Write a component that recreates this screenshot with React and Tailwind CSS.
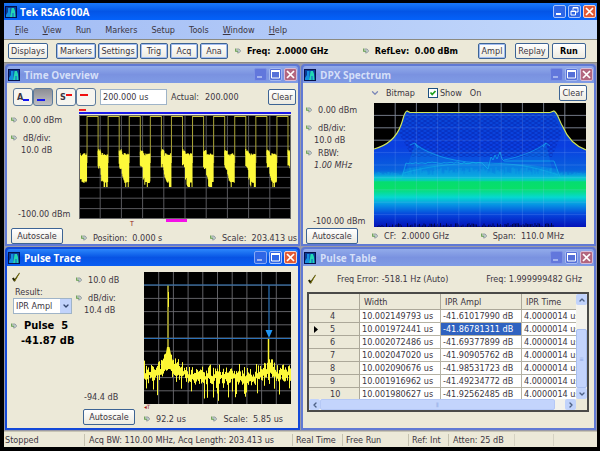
import { ChevronDown, ChevronUp, ChevronLeft, ChevronRight } from "lucide-react";

// Repeatable pseudo random numbers, so that the traces look the same on every load.
function makeRandom(seed) {
  let s = seed;
  return () => {
    s = (s * 16807) % 2147483647;
    return s / 2147483647;
  };
}

function AppIcon() {
  return (
    <svg viewBox="0 0 12 12" className="size-3 shrink-0" aria-hidden="true">
      <rect width="12" height="12" fill="#06104a" />
      <rect x="1" y="1" width="10" height="10" fill="#0a3a96" />
      <path d="M1 11V9L3 6V2H5.500V11Z" fill="#1590e0" />
      <path d="M5 11L6 6L6.500 2H9L10 5L10.500 11Z" fill="#22d8b4" />
      <path d="M7.500 11V7H8.500V11Z" fill="#1550cc" />
    </svg>
  );
}

function Knob() {
  return (
    <svg viewBox="0 0 6 6" className="size-[6px] shrink-0" aria-hidden="true">
      <path d="M1.500 1H4L5.300 2.200V3.500L4 4.800H2" fill="#c3cbd0" stroke="#8d979c" strokeWidth="0.900" />
      <path d="M0.700 0.500V3.200H3.200" fill="none" stroke="#5d9a48" strokeWidth="1.100" />
    </svg>
  );
}

function Check() {
  return (
    <svg viewBox="0 0 10 10" className="size-[10px]" aria-hidden="true">
      <path d="M1 6.500L2.800 5.500L3.800 7L8 1L9 0.800L4 9.500L3 9.500Z" fill="#222200" />
      <path d="M3.500 9L8.500 1.500" stroke="#b8a800" strokeWidth="0.600" />
    </svg>
  );
}

function WindowButtons({ active, main }) {
  const blue = active ? "bg-[#2f66e6] border-[#a9c3fa]" : "bg-[#5570d8] border-[#a5b8f0]";
  const dim = active ? "bg-[#2f66e6] border-[#86a8f5]" : "bg-[#6277dc] border-[#7d92e4]";
  const red = active ? "bg-[#e25a35] border-[#f8d5ca]" : "bg-[#b3667f] border-[#d9bcd6]";
  const base = "flex size-[13px] items-center justify-center rounded-[2px] border";
  return (
    <div className="flex gap-[2px]">
      <button aria-label="Minimize" className={`${base} ${main ? blue : dim}`}>
        <svg viewBox="0 0 11 11" className="size-[11px]">
          <path d="M2 8H7" stroke={main ? "#fff" : "#a3b3ee"} strokeWidth="2" />
        </svg>
      </button>
      <button aria-label={main ? "Restore" : "Maximize"} className={`${base} ${blue}`}>
        <svg viewBox="0 0 11 11" className="size-[11px]" fill="none" stroke="#fff">
          {main ? (
            <path d="M4 4V1.500H9V6H7M2 5H6.500V9H2ZM2 5.500H6.500M4 2H9" />
          ) : (
            <path d="M1.500 2V9H9.500V2M1 2.500H10M1 1.500H10" />
          )}
        </svg>
      </button>
      <button aria-label="Close" className={`${base} ${red}`}>
        <svg viewBox="0 0 11 11" className="size-[11px]">
          <path d="M2 2L9 9M9 2L2 9" stroke="#fff" strokeWidth="1.700" />
        </svg>
      </button>
    </div>
  );
}

function Button({ children, className = "", ringed }) {
  return (
    <button
      className={`flex h-4 items-center justify-center rounded-[2px] border border-[#3d6494] bg-gradient-to-b from-white to-[#eceae0] whitespace-nowrap ${ringed ? "ring-1 ring-[#a3bdf0] ring-inset" : ""} ${className}`}
    >
      {children}
    </button>
  );
}

function Panel({ title, active, children }) {
  return (
    <section
      className={`flex min-w-0 flex-col rounded-t-[4px] border-2 ${active ? "border-[#1348d8] bg-[#1348d8]" : "border-[#6079d4] bg-[#6079d4]"}`}
    >
      <header
        className={`flex h-[17px] shrink-0 items-center gap-1 rounded-t-[3px] px-px ${active ? "bg-gradient-to-b from-[#2c86fb] via-[#0853e4] to-[#0a5df2]" : "bg-gradient-to-b from-[#92abea] via-[#7a92e0] to-[#7f9be5]"}`}
      >
        <AppIcon />
        <h2
          className={`flex-1 font-['Open_Sans',sans-serif] text-[10px] font-bold ${active ? "text-white" : "text-[#d5dff8]"}`}
        >
          {title}
        </h2>
        <WindowButtons active={active} />
      </header>
      <div className="flex flex-1 flex-col bg-[#ece9d8]">{children}</div>
    </section>
  );
}

function Grid({ w, h, cols, rows, color = "#626266" }) {
  const lines = [];
  for (let i = 1; i < cols; i++) lines.push(`M${(w / cols) * i} 0V${h}`);
  for (let i = 1; i < rows; i++) lines.push(`M0 ${(h / rows) * i}H${w}`);
  return <path d={lines.join("")} stroke={color} strokeWidth="0.900" fill="none" />;
}

function TimePlot() {
  const rnd = makeRandom(77);
  let noise = "";
  let pulses = "";
  let tops = "";
  for (let p = -1; p < 10; p++) {
    const start = 19 + 21 * p;
    for (let i = 0; i < 10; i += 0.5) {
      const x = start + i;
      if (x < 0 || x > 210) continue;
      const early = i < 3;
      const top = early ? 34 + rnd() * 3 : 38 + rnd() * 3;
      const end = early ? 48 + i + rnd() * 5 : Math.min(66, 48 + i * 3.5) + (rnd() > 0.75 ? 6 : rnd() * 2);
      noise += `M${x} ${top}V${end}`;
    }
    if (p >= 0) {
      const a = 8 + 21 * p;
      pulses += `M${a} 48V1.500H${a + 11}V40`;
      tops += `M${a} 1.500H${a + 11}`;
    }
  }
  return (
    <svg viewBox="0 0 211 104" preserveAspectRatio="none" className="block h-[104px] w-full bg-black">
      <Grid w={211} h={104} cols={10} rows={10} />
      <path d={pulses} fill="none" stroke="#aaa436" strokeWidth="1" />
      <path d={noise} stroke="#fdf93a" strokeWidth="1" />
      <path d={tops} stroke="#cfc73c" />
      <rect x="0.500" y="0.500" width="210" height="103" fill="none" stroke="#666" />
    </svg>
  );
}

function PulsePlot() {
  const rnd = makeRandom(4242);
  let noise = "";
  for (let x = 0; x < 147; x += 1) {
    const d = Math.abs(x - 24);
    const e = Math.abs(x - 125);
    const lift = 18 * Math.exp(-d / 4) + 5 * Math.exp(-d / 12) + 7 * Math.exp(-e / 3);
    const slope = x > 40 && x < 112 ? 3 : 0;
    const top = 92 + slope - lift + rnd() * 10 - (rnd() > 0.85 ? 3 : 0);
    const deep = rnd() > 0.76 ? rnd() * 20 : 0;
    const end = 103 + slope - lift * 0.6 + rnd() * 7 + deep * (d < 10 ? 0.2 : 1);
    noise += `M${x + 0.5} ${top}V${end}`;
  }
  return (
    <svg viewBox="0 0 147 132" preserveAspectRatio="none" className="block h-[132px] w-full bg-black">
      <Grid w={147} h={132} cols={10} rows={10} color="#6c6c70" />
      <path d={noise} stroke="#fdf93a" strokeWidth="1" />
      <path d="M24 13V85" stroke="#8f8a2c" strokeWidth="2" />
      <path d="M24.500 20V35" stroke="#fbf532" strokeWidth="1" />
      <path d="M18 97L21 87L23 75L25.500 75L27.500 85L32 97Z" fill="#fbf532" />
      <path d="M124.500 66V102" stroke="#fbf532" strokeWidth="1.500" />
      <path d="M0 13H147M0 66.500H147M125 13V60" stroke="#2c72b8" strokeWidth="1.200" />
      <path d="M121.500 58H128.500L125 66Z" fill="#2196f3" />
    </svg>
  );
}

function SpectrumPlot() {
  const rnd = makeRandom(991);
  let spikes = "";
  for (let x = 0; x < 212; x += 1) {
    const tall = x > 30 && x < 182 ? 8 : 3;
    spikes += `M${x} ${75 - rnd() * tall - 3}V78`;
  }
  let floor = "";
  for (let x = 2; x < 180; x += 1.5) floor += `M${x} ${124 - rnd() * 4}V124`;
  let wave = "M28 74L32 60";
  for (let x = 34; x < 110; x += 2) wave += `L${x} ${59 + rnd() * 2}`;
  wave += "L114 66L117 54L119 57L121 52L123 56L126 49L128 56L130 58L180 58L186 74";
  const outline = "M0 46C15 42 23 33 27 22C30 14 30 9 33 8L36 9.500H176L180 8C184 10 185 18 189 24C193 34 199 42 212 47";
  return (
    <svg viewBox="0 0 212 124" preserveAspectRatio="none" className="block h-[124px] w-full bg-black">
      <defs>
        <linearGradient id="density" x1="0" y1="0" x2="0" y2="124" gradientUnits="userSpaceOnUse">
          <stop offset="0.060" stopColor="#0848d4" />
          <stop offset="0.350" stopColor="#0a3ee0" />
          <stop offset="0.540" stopColor="#0862de" />
          <stop offset="0.580" stopColor="#0590dc" />
          <stop offset="0.605" stopColor="#04d8c8" />
          <stop offset="0.640" stopColor="#06dc70" />
          <stop offset="0.690" stopColor="#08e068" />
          <stop offset="0.760" stopColor="#06d8d0" />
          <stop offset="0.820" stopColor="#0694e4" />
          <stop offset="0.900" stopColor="#0644dc" />
          <stop offset="1" stopColor="#0412b8" />
        </linearGradient>
        <pattern id="mesh" width="6" height="4" patternUnits="userSpaceOnUse">
          <path d="M0 0L3 2L6 0M0 4L3 2L6 4" fill="none" stroke="#0524ae" strokeWidth="0.600" />
        </pattern>
      </defs>
      <Grid w={212} h={124} cols={10} rows={10} color="#707074" />
      <path d={`${outline}V124H0Z`} fill="url(#density)" />
      <path d="M33 10H179L188 30L178 54H38L25 30Z" fill="url(#mesh)" />
      <path d="M41 40C58 52 82 59 112 61C138 59 158 52 172 40L180 74H30Z" fill="#0a8ae4" opacity="0.300" />
      <path d="M30 66L60 61H150L184 66V76H28Z" fill="#0aaee8" opacity="0.300" />
      <path d="M41 41C58 54 85 60 114 60M130 57C146 54 162 48 172 40M36 42L41 40L44 45M169 44L172 40L176 43" fill="none" stroke="#14a4ec" strokeWidth="1" opacity="0.700" />
      <path d={wave} fill="none" stroke="#12b4ec" strokeWidth="1" opacity="0.650" />
      <path d="M30 70C65 60 100 60 114 60C140 61 155 62 184 72" fill="none" stroke="#10b8e8" strokeWidth="1" opacity="0.500" />
      <path d={spikes} stroke="#12b6e6" strokeWidth="0.700" opacity="0.600" />
      <path d={floor} stroke="#020850" strokeWidth="1" />
      <g opacity="0.200">
        <Grid w={212} h={124} cols={10} rows={10} color="#a0c8ff" />
      </g>
      <path d={outline} fill="none" stroke="#d2e85a" strokeWidth="1.200" />
    </svg>
  );
}

function Reading({ children, className = "" }) {
  return (
    <div className={`flex items-center gap-[6px] whitespace-nowrap ${className}`}>
      <Knob />
      <span>{children}</span>
    </div>
  );
}

function TimeOverview() {
  const mode = "relative flex h-[18px] w-5 items-center rounded-[3px] border border-[#5b7a9c] px-[3px] font-bold";
  return (
    <Panel title="Time Overview">
      <div className="flex h-[26px] items-center pt-[2px] pr-[2px] pl-[6px]">
        <button className={`${mode} bg-[#f6f5ef]`}>
          A<i className="mt-[6px] h-[2px] flex-1 bg-[#1616f0]" />
        </button>
        <button aria-label="Trace only" className={`${mode} bg-gradient-to-b from-[#8c8e94] to-[#c0c0c4]`}>
          <i className="mt-[6px] h-[2px] w-2 bg-[#1616f0]" />
        </button>
        <button className={`${mode} ml-[3px] bg-[#f6f5ef]`}>
          S<i className="mb-1 h-[2px] flex-1 bg-[#f01010]" />
        </button>
        <button aria-label="Spectrum only" className={`${mode} bg-[#f6f5ef]`}>
          <i className="mb-1 h-[2px] w-2 bg-[#f01010]" />
        </button>
        <input
          aria-label="Length"
          defaultValue="200.000 us"
          className="ml-1 h-4 w-[67px] border border-[#9fb4c8] bg-white px-[2px]"
        />
        <span className="ml-1">Actual:</span>
        <span className="ml-[6px] flex-1">200.000</span>
        <Button className="w-7">Clear</Button>
      </div>
      <div className="flex">
        <div className="flex w-[72px] shrink-0 flex-col pt-[5px] pl-1">
          <Reading>0.00 dBm</Reading>
          <Reading className="mt-[6px]">dB/div:</Reading>
          <div className="pl-[10px]">10.0 dB</div>
          <div className="mt-auto pb-[2px] pl-[7px] whitespace-nowrap">-100.00 dBm</div>
        </div>
        <div className="flex min-w-0 flex-1 flex-col pr-[7px]">
          <div className="h-[2px] w-[7px] bg-[#f02020]" />
          <div className="my-px h-[2px] bg-[#1a1ae8]" />
          <TimePlot />
          <div className="ml-[41%] h-[3px] w-[21px] bg-[#f510e8]" />
        </div>
      </div>
      <div className="flex h-[5px] items-end pl-[123px] text-[7px] leading-[5px] text-[#902020]">T</div>
      <div className="flex h-[17px] items-center pr-px pl-1">
        <Button className="w-[52px]">Autoscale</Button>
        <Reading className="ml-[18px] pt-1">Position:&nbsp; 0.000 s</Reading>
        <Reading className="ml-auto pt-1">Scale:&nbsp; 203.413 us</Reading>
      </div>
    </Panel>
  );
}

function DpxSpectrum() {
  return (
    <Panel title="DPX Spectrum">
      <div className="flex h-[20px] items-center pr-[7px] pl-[67px]">
        <ChevronDown className="size-[10px] text-[#7b88b8]" strokeWidth={3} />
        <span className="ml-[6px]">Bitmap</span>
        <label className="ml-[13px] flex items-center gap-[2px]">
          <span className="grid">
            <input
              type="checkbox"
              defaultChecked
              className="peer col-start-1 row-start-1 size-[10px] appearance-none border border-[#1c5180] bg-white"
            />
            <svg
              viewBox="0 0 10 10"
              className="pointer-events-none invisible col-start-1 row-start-1 size-[10px] peer-checked:visible"
            >
              <path d="M2.500 4.500L4.200 6.500L7.500 3" fill="none" stroke="#21a121" strokeWidth="1.800" />
            </svg>
          </span>
          Show
        </label>
        <span className="ml-2 flex-1">On</span>
        <Button className="w-7">Clear</Button>
      </div>
      <div className="flex">
        <div className="flex w-[71px] shrink-0 flex-col pt-px pl-[3px]">
          <Reading>0.00 dBm</Reading>
          <Reading className="mt-[6px]">dB/div:</Reading>
          <div className="pl-2">10.0 dB</div>
          <Reading className="mt-px">RBW:</Reading>
          <div className="pl-2 italic">1.00 MHz</div>
          <div className="mt-auto pl-[7px] whitespace-nowrap">-100.00 dBm</div>
        </div>
        <div className="min-w-0 flex-1 pr-2">
          <SpectrumPlot />
        </div>
      </div>
      <div className="flex h-[17px] items-center pl-[3px]">
        <Button className="w-[52px]">Autoscale</Button>
        <Reading className="ml-[14px]">CF:&nbsp; 2.0000 GHz</Reading>
        <Reading className="mr-[30px] ml-auto">Span:&nbsp; 110.0 MHz</Reading>
      </div>
    </Panel>
  );
}

function PulseTrace() {
  return (
    <Panel title="Pulse Trace" active>
      <div className="flex flex-1 pt-[6px]">
        <div className="w-[69px] shrink-0 pl-1">
          <Check />
          <label htmlFor="result" className="mt-1 block pl-1">
            Result:
          </label>
          <div className="relative ml-[2px] w-[59px]">
            <select
              id="result"
              className="block h-4 w-full appearance-none border border-[#9fb4c8] bg-white pl-[2px]"
            >
              <option>IPR Ampl</option>
            </select>
            <span className="pointer-events-none absolute top-px right-px flex h-[14px] w-[11px] items-center justify-center bg-[#c1d3fb]">
              <ChevronDown className="size-2 text-[#33466e]" strokeWidth={4} />
            </span>
          </div>
          <div className="mt-1 flex items-center gap-[7px] text-[11px] leading-[15px] font-bold whitespace-nowrap text-black">
            <Knob />
            Pulse&nbsp; 5
          </div>
          <div className="pl-[10px] text-[11px] leading-[15px] font-bold whitespace-nowrap text-black">-41.87 dB</div>
        </div>
        <div className="flex w-[68px] shrink-0 flex-col pt-[2px]">
          <Reading>10.0 dB</Reading>
          <Reading className="mt-[6px]">dB/div:</Reading>
          <div className="pl-2">10.4 dB</div>
          <div className="mt-auto pb-[6px] pl-2">-94.4 dB</div>
          <Button className="mb-[3px] ml-[7px] w-[52px]">Autoscale</Button>
        </div>
        <div className="flex min-w-0 flex-1 flex-col pr-[7px]">
          <PulsePlot />
          <div className="text-[6px] leading-[6px] text-[#a01818]">◂T</div>
          <div className="mt-[3px] flex justify-between pr-2">
            <Reading>92.2 us</Reading>
            <Reading>Scale:&nbsp; 5.85 us</Reading>
          </div>
        </div>
      </div>
    </Panel>
  );
}

const pulses = [
  ["4", "10.002149793 us", "-41.61017990 dB", "4.0000014 us"],
  ["5", "10.001972441 us", "-41.86781311 dB", "4.0000014 us"],
  ["6", "10.002072486 us", "-41.69377899 dB", "4.0000014 us"],
  ["7", "10.002047020 us", "-41.90905762 dB", "4.0000014 us"],
  ["8", "10.002090676 us", "-41.98531723 dB", "4.0000014 us"],
  ["9", "10.001916962 us", "-41.49234772 dB", "4.0000014 us"],
  ["10", "10.001980627 us", "-41.92562485 dB", "4.0000014 us"],
];

function PulseTable() {
  const head = "h-4 border-r border-b border-[#aca899] bg-[#ece9d8] px-1 text-left font-normal";
  const cell = "h-[13px] border-r border-b border-[#b5b2a4] px-[2px] whitespace-nowrap";
  const arrow = "flex size-[11px] shrink-0 items-center justify-center rounded-[2px] bg-[#c1d3fb] text-[#4d6185]";
  return (
    <Panel title="Pulse Table">
      <div className="flex h-[26px] items-center pr-3 pl-1">
        <Check />
        <span className="ml-5 flex-1">Freq Error: -518.1 Hz (Auto)</span>
        <span>Freq: 1.999999482 GHz</span>
      </div>
      <div className="mr-[5px] ml-1 flex flex-col border-2 border-[#4a4a48]">
        <div className="flex h-[105px]">
          <div className="min-w-0 flex-1 overflow-hidden bg-white">
            <table className="w-[294px] table-fixed border-separate border-spacing-0">
              <thead>
                <tr>
                  <th aria-label="Pulse" className={`${head} w-[51px]`} />
                  <th className={`${head} w-[81px]`}>Width</th>
                  <th className={`${head} w-[81px]`}>IPR Ampl</th>
                  <th className={`${head} w-[81px]`}>IPR Time</th>
                </tr>
              </thead>
              <tbody>
                {pulses.map(([id, width, ampl, time]) => (
                  <tr key={id}>
                    <th className="h-[13px] border-r border-b border-[#aca899] bg-[#ece9d8] pr-1 pl-[5px] font-normal">
                      <span className="flex items-center">
                        <span className="w-4">
                          {id === "5" && (
                            <svg viewBox="0 0 4 7" className="h-[7px] w-1">
                              <path d="M0 0L4 3.500L0 7Z" fill="#000" />
                            </svg>
                          )}
                        </span>
                        {id}
                      </span>
                    </th>
                    <td className={cell}>{width}</td>
                    <td className={`${cell} ${id === "5" ? "bg-[#2f62c0] text-white" : ""}`}>{ampl}</td>
                    <td className={cell}>{time}</td>
                  </tr>
                ))}
              </tbody>
            </table>
          </div>
          <div className="flex w-[11px] flex-col bg-[#f3f2ec]">
            <button aria-label="Scroll up" className={arrow}>
              <ChevronUp className="size-2" strokeWidth={4} />
            </button>
            <div className="mt-6 flex flex-1 items-center justify-center rounded-[2px] border border-[#a9bff0] bg-[#c3d4fc] text-[6px] text-[#8fa9e4]">
              ≡
            </div>
            <button aria-label="Scroll down" className={arrow}>
              <ChevronDown className="size-2" strokeWidth={4} />
            </button>
          </div>
        </div>
        <div className="flex h-[11px] bg-[#f3f2ec]">
          <button aria-label="Scroll left" className={arrow}>
            <ChevronLeft className="size-2" strokeWidth={4} />
          </button>
          <div className="mr-[10px] flex flex-1 items-center justify-center rounded-[2px] border border-[#b5c8f6] bg-[#c3d4fc] text-[6px] text-[#8fa9e4]">
            ⦀
          </div>
          <button aria-label="Scroll right" className={arrow}>
            <ChevronRight className="size-2" strokeWidth={4} />
          </button>
          <div className="w-[11px] bg-[#ece9d8]" />
        </div>
      </div>
    </Panel>
  );
}

function Menu({ label, underline }) {
  return (
    <button>
      {underline ? (
        <>
          <u>{label[0]}</u>
          {label.slice(1)}
        </>
      ) : (
        label
      )}
    </button>
  );
}

export default function App() {
  return (
    <div className="flex min-h-screen flex-col bg-black pt-[3px] pr-[3px] pb-1 pl-1 font-['DejaVu_Sans_Condensed','DejaVu_Sans',sans-serif] text-[9px] leading-[12px] text-[#3c3642]">
      <header className="flex h-[17px] items-center gap-[3px] bg-gradient-to-b from-[#1a78f8] via-[#0455e6] to-[#0462fa] px-px">
        <AppIcon />
        <h1 className="flex-1 font-['Open_Sans',sans-serif] text-[10px] font-bold text-white">Tek RSA6100A</h1>
        <WindowButtons active main />
      </header>
      <nav className="flex h-[19px] items-center gap-[14px] bg-gradient-to-r from-[#a2bcf4] to-[#c3d8fb] px-[11px]">
        <Menu label="File" underline />
        <Menu label="View" underline />
        <Menu label="Run" />
        <Menu label="Markers" />
        <Menu label="Setup" />
        <Menu label="Tools" />
        <Menu label="Window" underline />
        <Menu label="Help" underline />
      </nav>
      <div className="flex h-6 items-center border-t border-b border-[#8c8a80] bg-[#ece9d8] pr-[11px] pl-1">
        <Button className="w-10">Displays</Button>
        <div className="ml-2 flex gap-[2px]">
          <Button ringed className="w-10">Markers</Button>
          <Button ringed className="w-10">Settings</Button>
          <Button ringed className="w-7">Trig</Button>
          <Button ringed className="w-7">Acq</Button>
          <Button ringed className="w-7">Ana</Button>
        </div>
        <Reading className="ml-[7px] font-bold text-black">Freq:&nbsp; 2.0000 GHz</Reading>
        <div className="flex-1" />
        <Reading className="font-bold text-black">RefLev:&nbsp; 0.00 dBm</Reading>
        <Button ringed className="ml-5 w-7">Ampl</Button>
        <Button className="ml-[9px] w-[34px]">Replay</Button>
        <Button className="ml-[3px] w-[34px] font-bold text-black">Run</Button>
      </div>
      <main className="grid flex-1 grid-cols-2 grid-rows-[auto_1fr] gap-px bg-[#9a9aa8] p-px">
        <TimeOverview />
        <DpxSpectrum />
        <PulseTrace />
        <PulseTable />
      </main>
      <footer className="flex h-4 items-center border-t border-[#c8c5b4] bg-[#ece9d8] whitespace-nowrap">
        <span className="w-20 pl-px">Stopped</span>
        <span className="w-[208px] border-l border-[#c5c2b0] pl-1">
          Acq BW: 110.00 MHz, Acq Length: 203.413 us
        </span>
        <span className="w-[50px] border-l border-[#c5c2b0] pl-[3px]">Real Time</span>
        <span className="w-[66px] border-l border-[#c5c2b0] pl-[3px]">Free Run</span>
        <span className="w-10 border-l border-[#c5c2b0] pl-[3px]">Ref: Int</span>
        <span className="w-[66px] border-l border-[#c5c2b0] pl-1">Atten: 25 dB</span>
        <span className="h-3 w-10 border-x border-[#d5d2c2]" />
      </footer>
    </div>
  );
}
